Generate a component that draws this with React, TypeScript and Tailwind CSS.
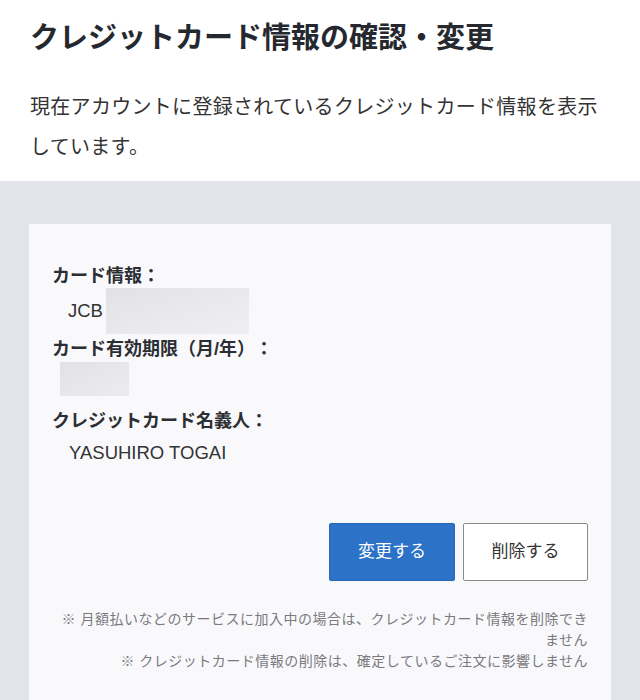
import React from "react";

const FONT = '"Liberation Sans", "Noto Sans CJK JP", sans-serif';

export default function App() {
  return (
    <div
      className="w-[640px] min-h-[700px] bg-[#e1e4e9] [text-spacing-trim:space-all]"
      style={{ fontFamily: FONT }}
    >
      <section className="bg-white px-[30px] pt-[18px] pb-[14px]">
        <h1 className="text-[29px] leading-[40px] font-bold text-[#25292f]">
          クレジットカード情報の確認・変更
        </h1>
        <p className="mt-[29px] text-[20px] leading-[40px] tracking-[0.3px] text-[#333]">
          現在アカウントに登録されているクレジットカード情報を表示しています。
        </p>
      </section>
      <div className="px-[29px] pt-[43px]">
        <div className="bg-[#f9f9fb] px-[23px] pt-[40px] pb-[40px]">
          <div className="text-[18px] leading-[24px] font-bold text-[#2b2e33]">カード情報：</div>
          <div className="flex h-[45px] items-center pl-[16px]">
            <span className="text-[18.5px] text-[#333]">JCB</span>
            <span className="ml-[3px] h-[46px] w-[143px] bg-gradient-to-br from-[#e2e2e4] via-[#e9e9eb] to-[#efeff1]" />
          </div>
          <div className="mt-[4px] text-[18px] leading-[24px] font-bold text-[#2b2e33]">
            カード有効期限（月/年）：
          </div>
          <div className="mt-[1px] pl-[8px]">
            <div className="h-[34px] w-[69px] bg-gradient-to-br from-[#e2e2e4] to-[#ececee]" />
          </div>
          <div className="mt-[13px] text-[18px] leading-[24px] font-bold text-[#2b2e33]">
            クレジットカード名義人：
          </div>
          <div className="mt-[5px] pl-[17px] text-[18.5px] leading-[30px] text-[#333]">YASUHIRO TOGAI</div>
          <div className="mt-[55px] flex justify-end gap-[8px]">
            <button className="h-[58px] w-[126px] rounded-[2px] border border-[#2567b8] bg-[#2c72c6] text-[17px] text-white">
              変更する
            </button>
            <button className="h-[58px] w-[125px] rounded-[2px] border border-[#8a8a8a] bg-white text-[17px] text-[#333]">
              削除する
            </button>
          </div>
          <div className="mt-[28px] text-right text-[14px] leading-[21px] tracking-[0.5px] text-[#7a7a7e]">
            <p>※ 月額払いなどのサービスに加入中の場合は、クレジットカード情報を削除できません</p>
            <p>※ クレジットカード情報の削除は、確定しているご注文に影響しません</p>
          </div>
        </div>
      </div>
    </div>
  );
}
